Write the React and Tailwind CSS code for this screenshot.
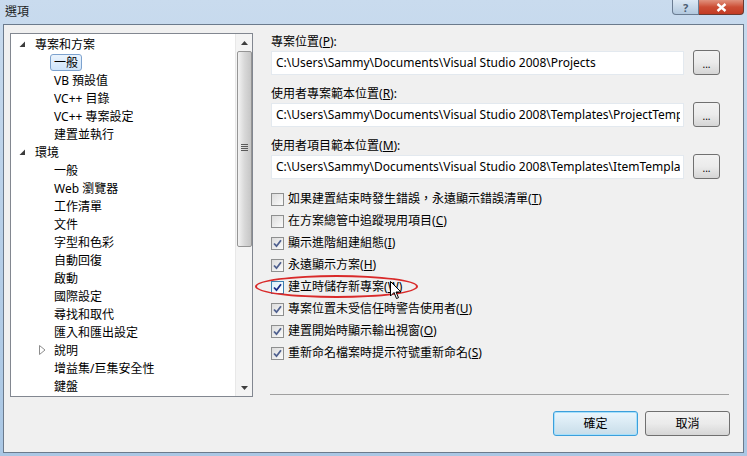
import React from 'react';

const FONT = { fontFamily: '"Segoe UI", "Noto Sans", "Noto Sans CJK TC", sans-serif' };

const treeItems = [
  { label: '專案和方案', level: 0, arrow: 'open' },
  { label: '一般', level: 1, selected: true },
  { label: 'VB 預設值', level: 1 },
  { label: 'VC++ 目錄', level: 1 },
  { label: 'VC++ 專案設定', level: 1 },
  { label: '建置並執行', level: 1 },
  { label: '環境', level: 0, arrow: 'open' },
  { label: '一般', level: 1 },
  { label: 'Web 瀏覽器', level: 1 },
  { label: '工作清單', level: 1 },
  { label: '文件', level: 1 },
  { label: '字型和色彩', level: 1 },
  { label: '自動回復', level: 1 },
  { label: '啟動', level: 1 },
  { label: '國際設定', level: 1 },
  { label: '尋找和取代', level: 1 },
  { label: '匯入和匯出設定', level: 1 },
  { label: '說明', level: 1, arrow: 'closed' },
  { label: '增益集/巨集安全性', level: 1 },
  { label: '鍵盤', level: 1 },
];

const paths = [
  { label: '專案位置', key: 'P', value: 'C:\\Users\\Sammy\\Documents\\Visual Studio 2008\\Projects' },
  { label: '使用者專案範本位置', key: 'R', value: 'C:\\Users\\Sammy\\Documents\\Visual Studio 2008\\Templates\\ProjectTemplates' },
  { label: '使用者項目範本位置', key: 'M', value: 'C:\\Users\\Sammy\\Documents\\Visual Studio 2008\\Templates\\ItemTemplates' },
];

const options = [
  { label: '如果建置結束時發生錯誤，永遠顯示錯誤清單', key: 'T', checked: false },
  { label: '在方案總管中追蹤現用項目', key: 'C', checked: false },
  { label: '顯示進階組建組態', key: 'I', checked: true },
  { label: '永遠顯示方案', key: 'H', checked: true },
  { label: '建立時儲存新專案', key: 'W', checked: true, hot: true },
  { label: '專案位置未受信任時警告使用者', key: 'U', checked: true },
  { label: '建置開始時顯示輸出視窗', key: 'O', checked: true },
  { label: '重新命名檔案時提示符號重新命名', key: 'S', checked: true },
];

const Arrow = ({ type }) =>
  type === 'open' ? (
    <svg width="7" height="7" viewBox="0 0 7 7">
      <path d="M6 0.5 L6 6 L0.5 6 Z" fill="#3c3c3c" />
    </svg>
  ) : (
    <svg width="7" height="10" viewBox="0 0 7 10">
      <path d="M0.5 0.5 L6 5 L0.5 9.5 Z" fill="none" stroke="#8c8c8c" />
    </svg>
  );

const Checkbox = ({ checked, hot }) => (
  <div
    className={`w-[13px] h-[13px] border flex items-center justify-center ${
      hot ? 'border-[#3c7fb1] bg-gradient-to-br from-[#dbeffb] to-[#ffffff]' : 'border-[#8e8f8f] bg-gradient-to-br from-[#dcdcdc] to-[#fbfbfb]'
    }`}
  >
    {checked && (
      <svg width="9" height="9" viewBox="0 0 9 9">
        <path d="M1 4.5 L3.5 7.2 L8 1.2" fill="none" stroke={hot ? '#1a2b8a' : '#4f608f'} strokeWidth="1.8" />
      </svg>
    )}
  </div>
);

const App = () => {
  return (
    <div
      className="relative w-[747px] h-[456px] flex flex-col bg-gradient-to-b from-[#c9dbee] via-[#b7cfe8] to-[#aac7e4] text-[12px] text-black overflow-hidden"
      style={FONT}
    >
      {/* Title bar */}
      <div className="h-[24px] flex items-start justify-between pl-[5px] pr-[3px]">
        <span className="mt-[3px] text-[12px] text-[#1e1e1e]">選項</span>
        <div className="flex">
          <div className="w-[27px] h-[15px] border border-[#6a7c92] border-t-0 rounded-bl-[4px] bg-gradient-to-b from-[#dce8f4] to-[#b2c8de] flex items-center justify-center text-[11px] font-bold leading-none">
            <span className="text-[#4b5d72]">?</span>
          </div>
          <div className="w-[45px] h-[15px] border border-[#6a3a30] border-t-0 border-l-0 rounded-br-[4px] bg-gradient-to-b from-[#e0917d] via-[#cc4d35] to-[#c23b24] flex items-center justify-center">
            <svg width="11" height="9" viewBox="0 0 11 9">
              <path d="M1.5 1 L9.5 8 M9.5 1 L1.5 8" stroke="#ffffff" strokeWidth="2.4" />
            </svg>
          </div>
        </div>
      </div>

      {/* Client area */}
      <div className="flex-1 mx-[3px] mb-[3px] border border-[#6b7a8c] bg-[#f0f0f0] flex pl-[6px] pr-[12px] pt-[8px] pb-[16px]">
        {/* Tree */}
        <div className="w-[243px] h-[364px] border border-[#828790] bg-white flex shrink-0">
          <div className="flex-1 pt-[1px] flex flex-col">
            {treeItems.map((item, i) => (
              <div key={i} className="h-[18px] flex items-center">
                <div className={`${item.level === 0 ? 'w-[20px] pr-[5px]' : 'w-[39px] pr-[4px]'} shrink-0 flex justify-end`}>
                  {item.arrow && <Arrow type={item.arrow} />}
                </div>
                <span
                  className={`px-[3px] leading-[15px] ${
                    item.selected ? 'border border-[#7da2ce] rounded-[3px] bg-gradient-to-b from-[#ebf4fd] to-[#cfe4fa]' : 'border border-transparent'
                  }`}
                >
                  {item.label}
                </span>
              </div>
            ))}
          </div>
          {/* Scrollbar */}
          <div className="w-[17px] bg-[#f4f4f4] border-l border-[#e8e8e8] flex flex-col items-center">
            <div className="h-[17px] flex items-center justify-center">
              <svg width="7" height="4" viewBox="0 0 7 4">
                <path d="M0 4 L3.5 0 L7 4 Z" fill="#3f3f3f" />
              </svg>
            </div>
            <div className="w-[15px] h-[196px] border border-[#959595] rounded-[2px] bg-gradient-to-r from-[#f3f3f3] via-[#d8d8d8] to-[#c6c6c6] flex items-center justify-center">
              <div className="flex flex-col gap-[1px] mt-[-4px]">
                <div className="w-[7px] h-[1px] bg-[#5a5a5a]" />
                <div className="w-[7px] h-[1px] bg-[#5a5a5a]" />
                <div className="w-[7px] h-[1px] bg-[#5a5a5a]" />
                <div className="w-[7px] h-[1px] bg-[#5a5a5a]" />
              </div>
            </div>
            <div className="flex-1" />
            <div className="h-[17px] flex items-center justify-center">
              <svg width="7" height="4" viewBox="0 0 7 4">
                <path d="M0 0 L3.5 4 L7 0 Z" fill="#3f3f3f" />
              </svg>
            </div>
          </div>
        </div>

        {/* Right column */}
        <div className="flex-1 ml-[18px] flex flex-col">
          {paths.map((p, i) => (
            <div key={i} className="mb-[10px]">
              <div className="h-[17px] leading-[17px]">
                {p.label}(<span className="underline">{p.key}</span>):
              </div>
              <div className="h-[25px] flex items-center gap-[9px]">
                <div className="w-[413px] h-[24px] border border-[#e3e9ef] bg-white flex items-center pl-[4px] overflow-hidden">
                  <span className="block w-[404px] overflow-hidden whitespace-nowrap">{p.value}</span>
                </div>
                <div className="w-[27px] h-[25px] border border-[#707070] rounded-[3px] bg-gradient-to-b from-[#f2f2f2] via-[#ebebeb] to-[#d5d5d5] flex items-end justify-center pb-[5px] leading-none text-[10px]">
                  ...
                </div>
              </div>
            </div>
          ))}

          <div className="flex flex-col mt-[-1px]">
            {options.map((o, i) => (
              <div key={i} className="h-[22px] flex items-center gap-[4px]">
                <Checkbox checked={o.checked} hot={o.hot} />
                <span className="whitespace-nowrap">
                  {o.label}(<span className="underline">{o.key}</span>)
                </span>
              </div>
            ))}
          </div>

          <div className="flex-1" />
          <div className="h-[1px] bg-[#a0a0a0] mr-[2px] ml-[-1px]" />
          <div className="flex justify-end gap-[7px] mt-[16px] pr-[1px]">
            <button className="w-[85px] h-[25px] border border-[#3c9fdb] rounded-[3px] bg-gradient-to-b from-[#eaf6fd] to-[#c8dde9] shadow-[inset_0_0_0_1px_#a7e0fb]">
              確定
            </button>
            <button className="w-[85px] h-[25px] border border-[#707070] rounded-[3px] bg-gradient-to-b from-[#f2f2f2] via-[#ebebeb] to-[#d6d6d6]">
              取消
            </button>
          </div>
        </div>
      </div>

      {/* Red annotation ellipse */}
      <div className="absolute left-[255px] top-[275px] w-[163px] h-[23px] border-2 border-[#d92a2a] rounded-[50%]" />
      {/* Mouse cursor */}
      <svg className="absolute left-[390px] top-[281px]" width="12" height="19" viewBox="0 0 12 19">
        <path d="M0.5 0.5 L0.5 15 L4 11.5 L6.5 17.5 L8.5 16.7 L6 11 L11 11 Z" fill="#ffffff" stroke="#000000" strokeWidth="1" />
      </svg>
    </div>
  );
};

export default App;
